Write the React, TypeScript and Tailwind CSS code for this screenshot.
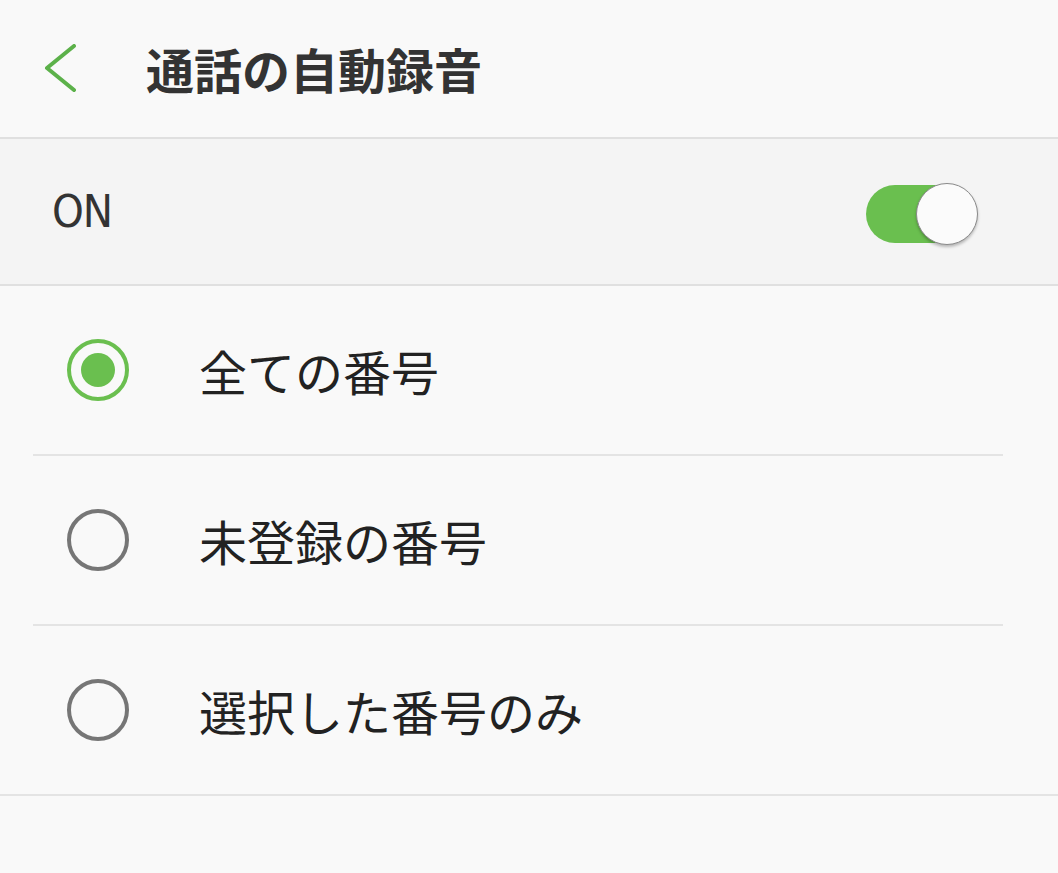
import React from "react";

const font = { fontFamily: '"Noto Sans CJK JP", "Noto Sans", sans-serif' };

function Radio({ checked }: { checked: boolean }) {
  return checked ? (
    <div className="w-[62px] h-[62px] rounded-full border-[4px] border-[#6abf4f] flex items-center justify-center">
      <div className="w-[34px] h-[34px] rounded-full bg-[#6abf4f]" />
    </div>
  ) : (
    <div className="w-[62px] h-[62px] rounded-full border-[4px] border-[#767676]" />
  );
}

function Row({ label, checked, inset }: { label: string; checked: boolean; inset: boolean }) {
  return (
    <div>
      <div className="h-[168px] flex items-center pl-[67px]">
        <Radio checked={checked} />
        <span className="ml-[70px] text-[48px] text-[#222222] leading-none" style={font}>
          {label}
        </span>
      </div>
      <div className={inset ? "h-[2px] bg-[#e4e4e4] ml-[33px] mr-[55px]" : "h-[2px] bg-[#e4e4e4]"} />
    </div>
  );
}

export default function App() {
  return (
    <div className="w-[1058px] h-[873px] bg-[#f9f9f9] overflow-hidden" style={font}>
      <div className="h-[139px] flex items-center pl-[44px] border-b-2 border-[#e0e0e0]">
        <svg width="34" height="50" viewBox="0 0 34 50" className="shrink-0">
          <polyline points="30,2 3,24 30,46" fill="none" stroke="#5cb14a" strokeWidth="4" strokeLinecap="round" strokeLinejoin="round" />
        </svg>
        <span className="ml-[68px] text-[48px] font-bold text-[#333333] leading-none -mt-[2px]">通話の自動録音</span>
      </div>
      <div className="h-[147px] flex items-center justify-between pl-[52px] pr-[80px] bg-[#f4f4f4] border-b-2 border-[#e0e0e0]">
        <span className="text-[45px] text-[#333333] leading-none tracking-[-1px]" style={{ fontFamily: '"DejaVu Sans Condensed", Roboto, sans-serif' }}>ON</span>
        <div className="relative w-[112px] h-[62px] mt-[4px]">
          <div className="absolute left-0 top-[2px] w-[100px] h-[58px] rounded-full bg-[#6abf4f]" />
          <div className="absolute right-0 top-0 w-[62px] h-[62px] rounded-full bg-[#fbfbfb] border border-[#8a8a8a] shadow-[0_2px_3px_rgba(0,0,0,0.25)]" />
        </div>
      </div>
      <Row label="全ての番号" checked={true} inset={true} />
      <Row label="未登録の番号" checked={false} inset={true} />
      <Row label="選択した番号のみ" checked={false} inset={false} />
    </div>
  );
}
